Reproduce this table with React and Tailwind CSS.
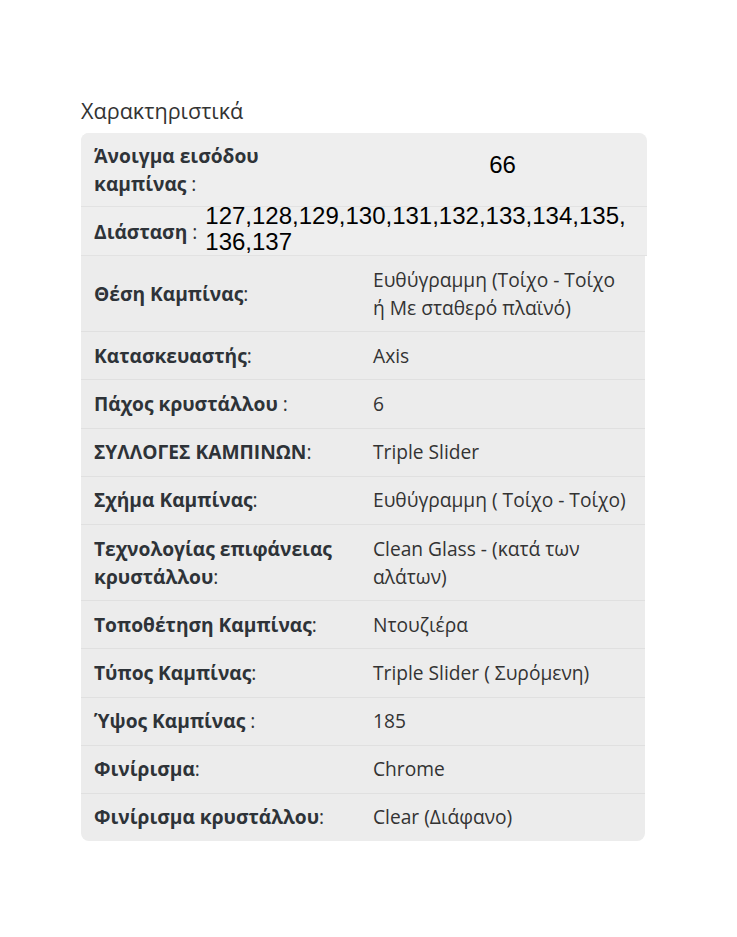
export default function App() {
  const rows = [
    { l: "Θέση Καμπίνας", c: ":", v: "Ευθύγραμμη (Τοίχο - Τοίχο ή Με σταθερό πλαϊνό)" },
    { l: "Κατασκευαστής", c: ":", v: "Axis" },
    { l: "Πάχος κρυστάλλου", c: " :", v: "6" },
    { l: "ΣΥΛΛΟΓΕΣ ΚΑΜΠΙΝΩΝ", c: ":", v: "Triple Slider" },
    { l: "Σχήμα Καμπίνας", c: ":", v: "Ευθύγραμμη ( Τοίχο - Τοίχο)" },
    { l: "Τεχνολογίας επιφάνειας κρυστάλλου", c: ":", v: "Clean Glass - (κατά των αλάτων)" },
    { l: "Τοποθέτηση Καμπίνας", c: ":", v: "Ντουζιέρα" },
    { l: "Τύπος Καμπίνας", c: ":", v: "Triple Slider ( Συρόμενη)" },
    { l: "Ύψος Καμπίνας", c: " :", v: "185" },
    { l: "Φινίρισμα", c: ":", v: "Chrome" },
    { l: "Φινίρισμα κρυστάλλου", c: ":", v: "Clear (Διάφανο)" },
  ];
  return (
    <div className="min-h-[937px] bg-white pl-[81px] pr-[92px] pt-[96px] text-[#333] font-['Open_Sans',sans-serif]">
      <h2 className="text-[21.6px] leading-[30px] mb-[7px]">Χαρακτηριστικά</h2>
      <div className="w-[564px] rounded-[8px] bg-[#ececec]">
        <div className="w-[566px] bg-[#eeeeee] rounded-tl-[8px] rounded-tr-[8px]">
          <div className="flex items-center border-b border-[#e2e2e2] h-[74px]">
            <div className="w-[279px] shrink-0 pl-[13px] pr-[13px] text-[19.2px] leading-[28px] font-bold text-[#2e3338]">
              Άνοιγμα εισόδου καμπίνας <span className="font-normal">:</span>
            </div>
            <div className="flex-1 text-center pb-[10px] pr-[2px] font-['Liberation_Sans',Arial,sans-serif] text-[24px] leading-[26px] text-black">
              66
            </div>
          </div>
          <div className="flex items-center h-[49px] border-b border-[#e2e2e2]">
            <div className="pl-[13px] pr-[8px] pt-[2px] text-[19.2px] leading-[28px] font-bold text-[#2e3338] whitespace-nowrap">
              Διάσταση <span className="font-normal">:</span>
            </div>
            <div className="w-[430px] pb-[5px] font-['Liberation_Sans',Arial,sans-serif] text-[24px] leading-[26px] text-black">
              127,128,129,130,131,132,133,134,135,
              <br />
              136,137
            </div>
          </div>
        </div>
        {rows.map((r, i) => (
          <div
            key={i}
            className={`flex py-[9.6px] ${i < rows.length - 1 ? "border-b border-[#e0e0e0]" : ""}`}
          >
            <div className="w-[279px] shrink-0 px-[13px] flex items-center text-[19.2px] leading-[28px] text-[#2e3338]">
              <div>
                <span className="font-bold">{r.l}</span>
                {r.c}
              </div>
            </div>
            <div className="flex-1 pl-[13px] pr-[15px] flex items-center text-[19.2px] leading-[28px] text-[#333]">
              {r.v}
            </div>
          </div>
        ))}
      </div>
    </div>
  );
}
